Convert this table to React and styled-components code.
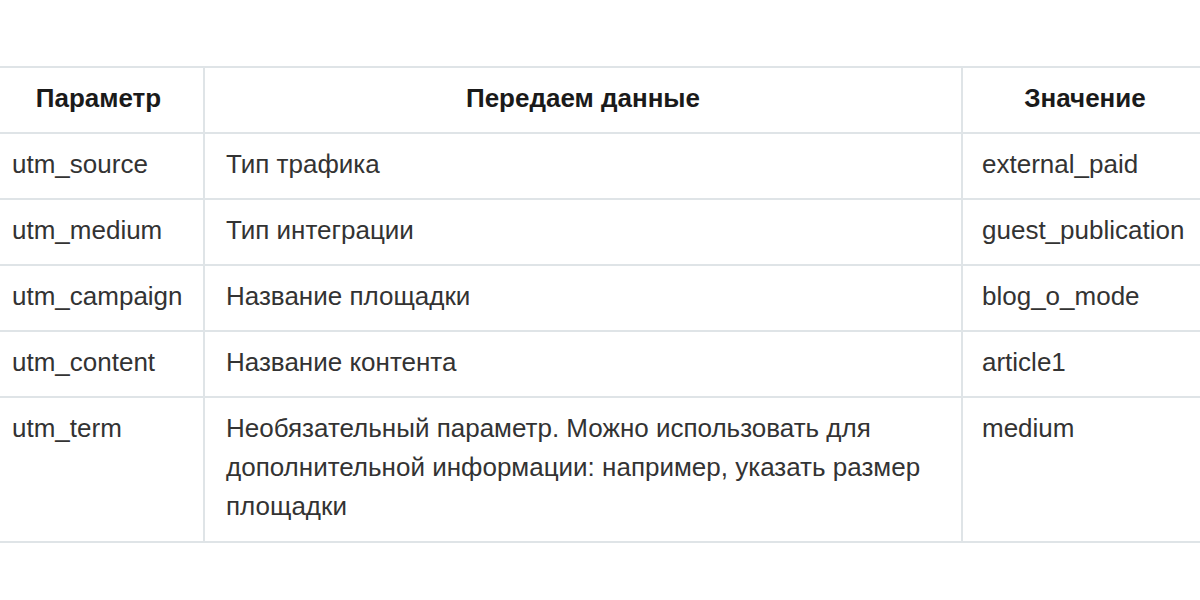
import styled, { createGlobalStyle } from "styled-components";

const Global = createGlobalStyle`
  html, body {
    margin: 0;
    background: #fff;
    overflow: hidden;
  }
`;

const Page = styled.div`
  width: 1200px;
  height: 600px;
  padding-top: 66px;
  box-sizing: border-box;
  overflow: hidden;
`;

const Table = styled.table`
  border-collapse: collapse;
  table-layout: fixed;
  width: 1215px;
  margin-left: -8px;
  font-family: "Liberation Sans", Arial, sans-serif;
  font-size: 26px;
  line-height: 39px;
  color: #333;
`;

const Th = styled.th`
  border: 2px solid #dfe4e7;
  padding: 11px 21px 14px;
  font-weight: bold;
  color: #1a1a1a;
  text-align: center;
`;

const Td = styled.td`
  border: 2px solid #dfe4e7;
  padding: 11px 21px 14px ${(p) => p.$padLeft || 21}px;
  vertical-align: top;
  text-align: left;
  white-space: ${(p) => (p.$nowrap ? "nowrap" : "normal")};
`;

const LastRow = styled.tr`
  td {
    padding-bottom: 15px;
  }
`;

const rows = [
  ["utm_source", "Тип трафика", "external_paid"],
  ["utm_medium", "Тип интеграции", "guest_publication"],
  ["utm_campaign", "Название площадки", "blog_o_mode"],
  ["utm_content", "Название контента", "article1"],
  [
    "utm_term",
    "Необязательный параметр. Можно использовать для дополнительной информации: например, указать размер площадки",
    "medium",
  ],
];

export default function App() {
  return (
    <>
      <Global />
      <Page>
        <Table>
          <colgroup>
            <col style={{ width: 211 }} />
            <col style={{ width: 758 }} />
            <col style={{ width: 246 }} />
          </colgroup>
          <thead>
            <tr>
              <Th>Параметр</Th>
              <Th>Передаем данные</Th>
              <Th>Значение</Th>
            </tr>
          </thead>
          <tbody>
            {rows.map((r, i) => {
              const Row = i === rows.length - 1 ? LastRow : "tr";
              return (
                <Row key={r[0]}>
                  <Td $padLeft={18}>{r[0]}</Td>
                  <Td>{r[1]}</Td>
                  <Td $padLeft={19} $nowrap>
                    {r[2]}
                  </Td>
                </Row>
              );
            })}
          </tbody>
        </Table>
      </Page>
    </>
  );
}
